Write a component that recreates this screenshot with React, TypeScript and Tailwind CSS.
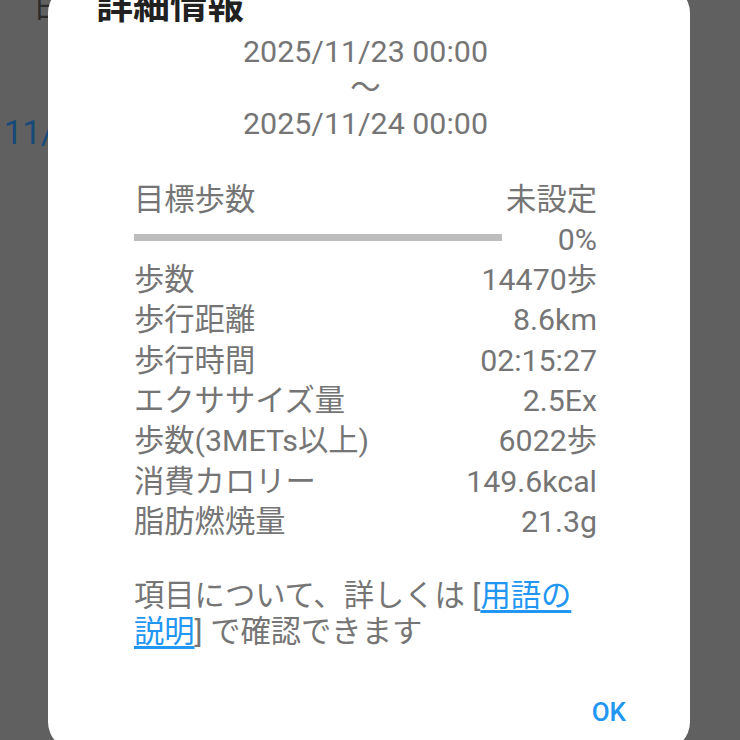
import React from 'react';

const rows: [string, string][] = [
  ['歩数', '14470歩'],
  ['歩行距離', '8.6km'],
  ['歩行時間', '02:15:27'],
  ['エクササイズ量', '2.5Ex'],
  ['歩数(3METs以上)', '6022歩'],
  ['消費カロリー', '149.6kcal'],
  ['脂肪燃焼量', '21.3g'],
];

const font = { fontFamily: 'Roboto, "Noto Sans CJK JP", sans-serif' };

export default function App() {
  return (
    <div className="relative h-[740px] w-[740px] overflow-hidden bg-[#606060]" style={font}>
      {/* dimmed page behind the dialog */}
      <div className="pl-[33px] text-[30px] leading-[30px] -mt-[8px] text-[#2a2a2a]">日</div>
      <div className="pl-[4px] mt-[91px] text-[33px] leading-[40px] text-[#17497a]">11/</div>

      <div className="absolute left-[48px] top-[-15px] w-[642px] rounded-[28px] bg-white pb-[14px]">
        <div className="pl-[48px] text-[37px] font-bold leading-[44px] text-[#212121]">詳細情報</div>

        <div className="ml-[86px] mr-[93px]">
          <div className="mt-[5px] text-center text-[30.4px] leading-[36px] text-[#757575]">
            <div>2025/11/23 00:00</div>
            <div>〜</div>
            <div>2025/11/24 00:00</div>
          </div>

          <div className="mt-[38px] flex justify-between text-[30.3px] leading-[40px] text-[#757575]">
            <span>目標歩数</span>
            <span>未設定</span>
          </div>
          <div className="flex items-center justify-between text-[30.3px] leading-[40px] text-[#757575]">
            <div className="-mt-[6px] h-[7px] w-[368px] bg-[#bdbdbd]" />
            <span>0%</span>
          </div>

          <div className="text-[30.3px] leading-[40.33px] text-[#757575]">
            {rows.map(([label, value]) => (
              <div key={label} className="flex justify-between">
                <span>{label}</span>
                <span>{value}</span>
              </div>
            ))}
          </div>

          <p className="mt-[36px] text-[30.3px] leading-[36px] text-[#757575]">
            項目について、詳しくは [<span className="text-[#2196f3] underline underline-offset-[4px]">用語の説明</span>] で確認できます
          </p>
        </div>

        <div className="mt-[38px] flex justify-end pr-[64px]">
          <button className="h-[48px] text-[26px] font-medium text-[#2196f3]">OK</button>
        </div>
      </div>
    </div>
  );
}
